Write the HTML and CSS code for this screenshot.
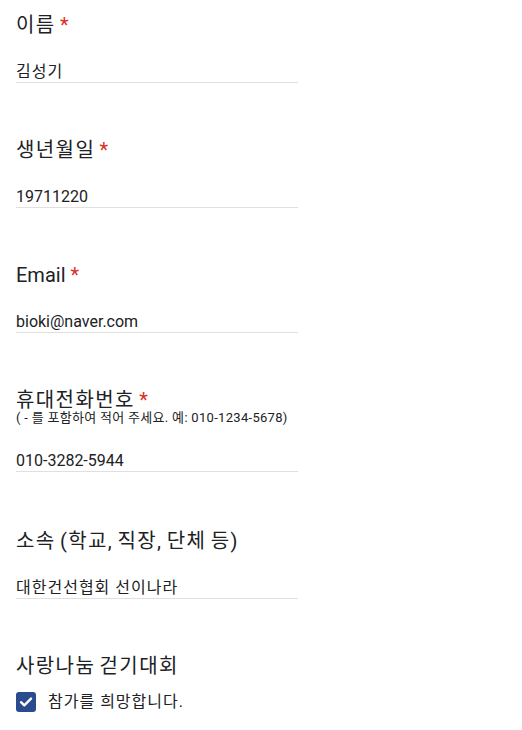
FILE: index.html
```html
<!DOCTYPE html>
<html lang="ko">
<head>
    <meta charset="UTF-8">
    <meta name="viewport" content="width=device-width, initial-scale=1.0">
    <title>참가 신청</title>
    <link rel="stylesheet" href="styles.css">
</head>
<body>
    <div class="form">
        <div class="question">
            <div class="q-title ko">이름 <span class="req">*</span></div>
            <div class="answer ko">김성기</div>
        </div>
        <div class="question">
            <div class="q-title ko">생년월일 <span class="req">*</span></div>
            <div class="answer">19711220</div>
        </div>
        <div class="question">
            <div class="q-title">Email <span class="req">*</span></div>
            <div class="answer">bioki@naver.com</div>
        </div>
        <div class="question with-help">
            <div class="q-title ko">휴대전화번호 <span class="req">*</span></div>
            <div class="q-help">( - 를 포함하여 적어 주세요. 예: 010-1234-5678)</div>
            <div class="answer">010-3282-5944</div>
        </div>
        <div class="question">
            <div class="q-title ko">소속 (학교, 직장, 단체 등)</div>
            <div class="answer ko">대한건선협회 선이나라</div>
        </div>
        <div class="question last">
            <div class="q-title ko">사랑나눔 걷기대회</div>
            <label class="check">
                <span class="box">
                    <svg width="20" height="20" viewBox="0 0 20 20"><path d="M5 10.2 L8.3 13.3 L15 6.6" fill="none" stroke="#fff" stroke-width="2.4" stroke-linecap="round" stroke-linejoin="round"/></svg>
                </span>
                <span class="check-label">참가를 희망합니다.</span>
            </label>
        </div>
    </div>
</body>
</html>
```

FILE: styles.css
```css
body {
    margin: 0;
    background-color: #fff;
    color: #202124;
    font-family: Roboto, "Noto Sans CJK KR", sans-serif;
}
.form {
    padding: 11px 16px 0 16px;
    width: 282px;
}
.question {
    margin-bottom: 53px;
}
.question.with-help {
    margin-bottom: 55px;
}
.question.last {
    margin-bottom: 0;
}
.q-title {
    font-size: 20px;
    line-height: 28px;
}
.q-title.ko {
    letter-spacing: 1.4px;
    word-spacing: -2px;
}
.req {
    color: #d93025;
}
.q-help {
    font-size: 13px;
    line-height: 17px;
    margin-top: -5px;
    letter-spacing: 0.3px;
}
.answer {
    margin-top: 22px;
    font-size: 16px;
    line-height: 21px;
    border-bottom: 1px solid #e0e0e0;
}
.answer.ko {
    letter-spacing: 1px;
}
.q-help + .answer {
    margin-top: 24px;
}
.check {
    display: flex;
    align-items: center;
    margin-top: 10px;
    gap: 12px;
}
.box {
    width: 20px;
    height: 20px;
    border-radius: 3px;
    background-color: #2a4b8d;
}
.box svg {
    display: block;
}
.check-label {
    font-size: 16px;
    line-height: 24px;
    letter-spacing: 1px;
}
```
